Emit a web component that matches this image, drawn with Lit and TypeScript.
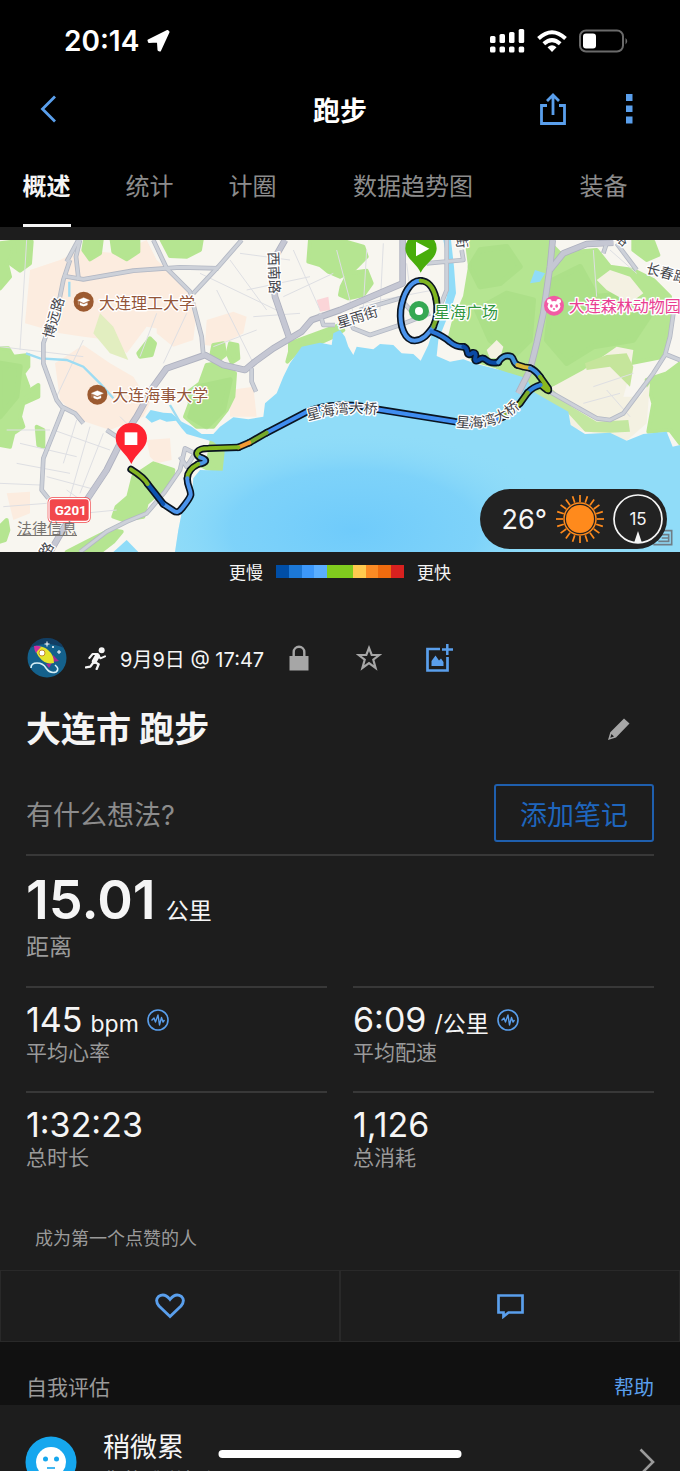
import { LitElement, html, svg, css } from 'lit';
import { customElement, property, state } from 'lit/decorators.js';
import { classMap } from 'lit/directives/class-map.js';
import { styleMap } from 'lit/directives/style-map.js';

// three map units per pixel at a width of 680
const SEA = `M525 966 L535 900 545 850 575 800 580 745 600 720 668 722 674 665 640 635 560 612 545 595 528 572 500 575 480 568
  455 578 436 562 452 540 490 548 515 550 545 575 575 590 605 612 640 612 660 590 700 562 745 568 790 560 795 520 830 490 850 440
  870 400 905 350 960 338 995 345 1000 310 1020 300 1035 320 1045 350 1060 375 1070 350 1120 358 1140 342 1180 345
  1205 370 1240 372 1262 392 1285 345 1302 290 1330 240 1345 180 1345 110 1330 30 1353 30 1362 110 1368 190 1352 240 1335 280
  1315 330 1310 378 1350 395 1390 388 1430 402 1500 420 1580 445 1600 485 1660 520 1705 545 1712 585 1755 612 1830 608
  1880 632 1930 612 2000 605 2018 650 2040 645 2040 966Z`;

const CAMPUS = [
  'M90 120 L180 90 240 60 350 70 440 30 470 90 560 170 590 250 500 300 440 290 380 370 330 330 250 320 180 310 75 280Z',
  'M250 345 L330 400 400 440 450 520 430 560 330 600 240 570 180 510 165 400Z',
  'M620 270 L700 245 740 260 730 310 650 350 615 345Z',
  'M470 270 L590 245 580 330 520 350 470 310Z',
  'M690 480 L760 470 770 560 690 560Z',
  'M440 630 L510 625 515 690 470 700 450 680Z',
  'M20 790 L90 785 90 850 40 870Z',
];

const PARKS = [
  'M0 355 L25 355 40 380 85 375 85 410 70 430 85 470 60 500 115 465 115 500 70 520 60 560 70 590 40 610 30 650 0 645Z',
  'M0 40 L40 35 35 80 20 100 30 140 0 175Z',
  'M40 30 L95 35 90 100 60 122 30 100 45 70Z',
  'M255 30 L305 30 300 70 270 88 250 60Z',
  'M335 30 L415 30 415 65 380 88 340 65Z',
  'M485 30 L605 30 600 60 560 80 510 78Z',
  'M930 30 L1020 30 1090 50 1100 80 1060 120 1020 140 985 125 960 105 925 95Z',
  'M1025 170 L1045 130 1100 122 1115 160 1090 195 1045 205 1020 195Z',
  'M555 560 L570 520 560 490 600 460 620 405 650 400 705 430 700 500 680 540 640 590 590 590Z',
  'M640 345 L670 340 675 375 650 395 635 370Z',
  'M690 340 L712 345 715 385 695 398 683 370Z',
  'M415 370 L450 325 465 340 455 375 420 380Z',
  'M110 590 L130 600 130 650 115 645Z',
  'M870 365 L870 340 1020 285 1030 300 1000 320 960 338 905 350 862 395Z',
  'M350 830 L385 800 400 740 460 700 520 720 515 755 440 820 430 860 370 870 340 860Z',
  'M200 966 L260 935 330 900 365 905 340 935 300 966Z',
  'M0 890 L20 870 25 900 15 930 0 935Z',
  'M635 632 L670 655 670 722 620 715 600 705 625 690Z',
  'M1395 200 L1410 110 1400 30 1640 30 1680 70 1790 60 1830 110 1900 120 1960 150 2010 200 2010 260 1990 380 1890 400 1800 410 1700 450 1640 470 1600 490 1560 445 1490 410 1420 390 1380 345 1350 320 1360 280Z',
  'M1940 450 L2000 430 2040 400 2040 640 2010 600 1945 605 1960 520Z',
  'M1900 30 L1960 35 1975 75 1940 90 1900 60Z',
];

const WOODS = [
  'M1410 110 L1440 60 1520 50 1560 110 1500 160 1440 170Z',
  'M1430 240 L1520 190 1600 210 1590 330 1540 380 1470 330Z',
  'M1660 150 L1740 110 1790 200 1880 190 1960 240 1900 330 1780 350 1700 400 1640 330Z',
  'M570 560 L600 470 690 450 670 540 620 590Z',
  'M0 400 L60 410 50 500 0 560Z',
];

const SAND = [
  'M1790 150 L1830 120 1890 140 1930 190 1890 220 1820 180Z',
  'M1750 420 L1850 350 1900 360 1890 430 1870 500 1920 500 1950 460 1940 580 1880 632 1700 590 1690 540 1640 480Z',
  'M1460 360 L1490 330 1510 350 1500 385 1470 385Z',
];

const LANES = [
  'M60 640 L230 680 M50 700 L210 730 M20 600 L150 600 M0 760 L120 765 M160 600 L330 660 M230 570 L190 700 M270 590 L210 800 M310 610 L240 790',
  'M140 740 L290 780 M150 860 L350 840 M200 780 L270 830 M10 830 L140 820 M360 560 L420 620',
  'M80 30 L60 360 M0 350 L250 380 M250 330 L170 500 M470 250 L420 380 M560 250 L490 400',
  'M600 130 L850 250 M690 90 L800 240 M650 180 L760 400 M720 70 L870 90 M740 180 L930 140 M850 200 L1000 130 M880 60 L960 240',
  'M760 260 L900 250 M640 350 L770 300 M1010 60 L1060 250 M1100 60 L1090 230 M1150 40 L1140 240 M1040 230 L1300 180 M1220 100 L1230 180',
  'M1780 60 L1790 200 M1830 60 L1910 130 M1780 470 L1900 430 M1820 480 L1890 560 M1750 520 L1860 490',
];

const STREETS = [
  'M240 30 L228 80 236 150',
  'M210 90 L190 150 180 200 130 340 130 400 170 510 185 530 225 550 250 580',
  'M190 138 L250 148 400 122 540 112 655 115',
  'M235 30 L200 95',
  'M460 30 L500 115 570 185 605 320 610 375',
  'M725 30 L655 110 580 190',
  'M190 535 L130 685 125 780 145 805',
  'M755 415 L755 455 768 485',
  'M960 250 L970 285 1005 285',
  'M240 966 L320 905 380 875 440 850 495 785 540 720 555 655 585 670 560 710 540 680',
  'M320 600 L350 620',
  'M1340 30 L1340 180 1320 230 M1280 100 L1390 90 1385 60',
  'M1050 270 L1060 295 1110 315 1200 285 1290 250 M1080 240 L1200 205 1240 250',
  'M1910 120 L1850 40 M1810 70 L1820 40',
  'M2020 250 L2010 320 1995 375 1960 430 1870 550 1830 570 1790 565 1640 480',
  'M1995 372 L2040 390',
];

const HIGHWAYS = [
  'M855 30 L815 100 825 200 870 330',
  'M1208 30 L1208 160 1020 240 935 270 905 305 820 355 765 395 735 420 670 405 615 375 500 415 460 470 410 560 370 620 320 720 260 810 200 880 150 966',
  'M1658 30 L1650 110 1630 250 1610 340 1590 420 1555 490',
  'M1650 120 L1690 70 1760 42 1840 38',
];

const ROUTE: [string, string][] = [
  ['M1262 152 C1230 150 1208 195 1202 240 C1198 290 1215 332 1244 332 C1270 330 1284 312 1300 290', '#4b94ec'],
  ['M1300 290 C1312 265 1314 235 1308 205', '#7cae2e'],
  ['M1308 205 C1300 170 1282 153 1262 152', '#7fb51f'],
  ['M1294 304 C1315 312 1335 322 1350 336 Q1370 352 1390 350', '#2a76d4'],
  ['M1390 350 Q1400 352 1402 366 T1418 368 Q1430 366 1426 382 T1436 390 Q1448 380 1460 391 T1495 397', '#0a4aa3'],
  ['M1495 397 C1505 380 1520 374 1534 380 C1544 388 1538 398 1552 405', '#3f92d8'],
  ['M1552 405 L1572 411 1590 414', '#d9b83a'],
  ['M1590 414 Q1606 420 1620 440', '#3d8de0'],
  ['M1620 440 L1645 475 Q1648 488 1636 476 L1622 464', '#8ab820'],
  ['M1622 465 Q1600 470 1583 488', '#2f80dc'],
  ['M1583 488 L1560 520 1510 560', '#7fae2c'],
  ['M1510 560 C1470 580 1420 582 1365 575 L1120 536', '#3f8df0'],
  ['M1120 536 C1060 520 980 520 915 548 L800 608', '#3f8df0'],
  ['M800 608 L748 638', '#75a92c'],
  ['M748 638 L715 652', '#f39a35'],
  ['M715 652 L625 655 C590 655 582 672 600 682', '#83b81f'],
  ['M600 682 C625 690 620 698 595 702', '#4c96e6'],
  ['M595 702 C575 712 562 725 562 745', '#86b820'],
  ['M562 745 C560 765 574 780 572 795 Q570 805 545 836 Q534 852 520 842 L490 822', '#4b94ec'],
  ['M490 822 L465 790 443 762', '#0d54b0'],
  ['M443 762 Q432 742 393 718', '#84b525'],
];

const PACE_COLORS = ['#004ea6', '#1c78d6', '#3c98fa', '#5aaeff', '#80cc1e', '#80cc1e', '#ffca4e', '#fb8b24', '#ef6b0e', '#d8211f'];

@customElement('activity-map')
export class ActivityMap extends LitElement {
  static styles = css`
    :host {
      display: block;
      position: relative;
      background: #8fdcf8;
    }
    .map {
      display: block;
      width: 100%;
      height: auto;
    }
    .label {
      font-family: 'Noto Sans CJK SC', sans-serif;
      font-size: 42px;
      fill: #45464c;
      stroke: #ffffff;
      stroke-width: 8px;
      stroke-linejoin: round;
      paint-order: stroke;
    }
    .place {
      font-size: 48px;
    }
    .school { fill: #935539; }
    .square { fill: #2f9640; }
    .zoo { fill: #e93f92; }
    .shield {
      font-family: 'Roboto', sans-serif;
      font-size: 40px;
      font-weight: 700;
      fill: #ffffff;
    }
    .legal {
      position: absolute;
      left: 17px;
      bottom: 13px;
      font-size: 15px;
      line-height: 20px;
      color: #77736f;
    }
    .weather {
      position: absolute;
      right: 13px;
      bottom: 3px;
      display: flex;
      align-items: center;
      gap: 8px;
      height: 60px;
      padding: 0 4px 0 21px;
      border-radius: 30px;
      background: #222222;
      color: #f5f5f5;
      font-size: 27px;
    }
    .weather svg {
      display: block;
    }
    .wind {
      display: grid;
      place-items: center;
      font-size: 17px;
    }
    .wind > * {
      grid-area: 1 / 1;
    }
  `;

  renderSchool(x: number, y: number) {
    return svg`
      <circle cx=${x} cy=${y} r="30" fill="#9c5a30"/>
      <path transform="translate(${x} ${y})" d="M-18 -4L0 -12 18 -4 0 4ZM-11 3V10Q0 17 11 10V3L0 8ZM-16 -2V9" fill="#fff" stroke="#fff" stroke-width="1"/>
    `;
  }

  render() {
    return html`
      <svg class="map" viewBox="0 30 2040 936" role="img" aria-label="路线地图">
        <defs>
          <radialGradient id="deep">
            <stop offset="0" stop-color="#6fcbfb"/>
            <stop offset=".6" stop-color="#79d0fa" stop-opacity=".8"/>
            <stop offset="1" stop-color="#90dcf8" stop-opacity="0"/>
          </radialGradient>
        </defs>
        <rect y="30" width="2040" height="936" fill="#f8f6f0"/>
        ${CAMPUS.map((d) => svg`<path d=${d} fill="#fcecdf"/>`)}
        <path d="M950 210L985 200 990 240 960 245Z" fill="#fbd5d8"/>
        <path d="M300 250L340 290 385 390 330 370 280 310Z" fill="#e2eec0"/>
        ${PARKS.map((d) => svg`<path d=${d} fill="#b5e591" stroke="#b5e591" stroke-width="12" stroke-linejoin="round"/>`)}
        ${WOODS.map((d) => svg`<path d=${d} fill="#9fd97c" stroke="#9fd97c" stroke-width="16" stroke-linejoin="round" opacity=".4"/>`)}
        ${SAND.map((d) => svg`<path d=${d} fill="#f4f1e2"/>`)}
        <path d="M1755 400L1820 375 1880 370 1900 410 1890 470 1830 410 1760 420Z" fill="#c5e59b"/>
        <path d="M1600 485L1660 480 1715 530 1790 575 1885 570 1890 605 1830 608 1755 605 1700 545 1640 520Z" fill="#c3e7a0"/>
        ${LANES.map((d) => svg`<path d=${d} fill="none" stroke="#dedfe3" stroke-width="3"/>`)}
        <path d=${SEA} fill="#90dcf8"/>
        <clipPath id="sea"><path d=${SEA}/></clipPath>
        <ellipse cx="1060" cy="900" rx="620" ry="300" fill="url(#deep)" clip-path="url(#sea)"/>
        <path d="M340 966L380 930 415 966Z" fill="#90dcf8"/>
        <path d="M78 370L120 385 200 390 250 410 300 460 340 505M208 155L208 200M510 525L545 585" fill="none" stroke="#9ddcf3" stroke-width="7"/>
        <path d="M1590 160L1605 120 1635 130 1620 155Z" fill="#90dcf8"/>
        <g fill="none" stroke-linejoin="round">
          ${STREETS.map((d) => svg`<path d=${d} stroke="#b3b8c4" stroke-width="14"/>`)}
          ${HIGHWAYS.map((d) => svg`<path d=${d} stroke="#aeb1bf" stroke-width="20"/>`)}
          ${STREETS.map((d) => svg`<path d=${d} stroke="#cdd1d9" stroke-width="9"/>`)}
          ${HIGHWAYS.map((d) => svg`<path d=${d} stroke="#c5c7d3" stroke-width="15"/>`)}
        </g>
        <g fill="none" stroke-linecap="round" stroke-linejoin="round">
          ${ROUTE.map(([d]) => svg`<path d=${d} stroke="#0a1420" stroke-width="22"/>`)}
          ${ROUTE.map(([d, color]) => svg`<path d=${d} stroke=${color} stroke-width="12"/>`)}
        </g>

        ${this.renderSchool(251, 215)}
        ${this.renderSchool(292, 494)}
        <circle cx="1257" cy="243" r="30" fill="#35a853"/>
        <circle cx="1257" cy="243" r="12" fill="#fff"/>
        <circle cx="1662" cy="227" r="30" fill="#f25ba4"/>
        <g fill="#fff">
          <circle cx="1648" cy="214" r="7"/>
          <circle cx="1676" cy="214" r="7"/>
          <ellipse cx="1662" cy="229" rx="19" ry="16"/>
        </g>
        <g fill="#f25ba4">
          <ellipse cx="1654" cy="228" rx="4" ry="5"/>
          <ellipse cx="1670" cy="228" rx="4" ry="5"/>
          <circle cx="1662" cy="237" r="3"/>
        </g>

        <path id="bridge-west" d="M924 572Q1030 540 1140 554" fill="none"/>
        <path id="bridge-east" d="M1367 590C1460 602 1526 580 1590 500" fill="none"/>
        <text class="label place school" x="297" y="236">大连理工大学</text>
        <text class="label place school" x="337" y="514">大连海事大学</text>
        <text class="label place square" x="1302" y="263">星海广场</text>
        <text class="label place zoo" x="1706" y="247">大连森林动物园</text>
        <text class="label" transform="translate(158 328) rotate(-74)">博远路</text>
        <text class="label" transform="translate(805 66) rotate(88)">西南路</text>
        <text class="label" transform="translate(1016 294) rotate(-17)">星雨街</text>
        <text class="label" transform="translate(1936 128) rotate(15)">长春路</text>
        <text class="label" transform="translate(1368 14) rotate(84)">街</text>
        <text class="label" transform="translate(1840 24) rotate(40)">路</text>
        <text class="label" transform="translate(142 984) rotate(-60)">路</text>
        <text class="label"><textPath href="#bridge-west">星海湾大桥</textPath></text>
        <text class="label"><textPath href="#bridge-east">星海湾大桥</textPath></text>

        <rect x="143" y="802" width="129" height="76" rx="14" fill="#f2474c"/>
        <rect x="147" y="806" width="121" height="68" rx="11" fill="#f2474c" stroke="#fff" stroke-width="4"/>
        <text class="shield" x="164" y="854">G201</text>

        <path d="M394 702C380 670 347 655 347 625A47 46 0 0 1 441 625C441 655 408 670 394 702Z" fill="#ff2330"/>
        <rect x="374" y="607" width="38" height="38" fill="#fff"/>
        <path d="M1262 128C1250 100 1216 85 1216 55A47 46 0 0 1 1310 55C1310 85 1276 100 1262 128Z" fill="#49ad0b"/>
        <path d="M1248 35L1288 56 1248 79Z" fill="#fff"/>
        <path d="M1975 902H2015V944H1960M1985 914H2006V934H1975M1985 924H2004" fill="none" stroke="#6f7d86" stroke-width="5"/>
      </svg>
      <a class="legal" href="#legal">法律信息</a>
      <div class="weather">
        <span>26°</span>
        <svg width="50" height="50" viewBox="-25 -25 50 50" aria-hidden="true">
          <circle r="14" fill="#ff8a1c"/>
          <circle r="16" fill="none" stroke="#ff8a1c" stroke-width="1.5"/>
          ${Array.from({ length: 20 }, (_, i) => svg`<path d="M0 -17V-24" stroke="#ff8a1c" stroke-width="1.7" transform="rotate(${i * 18})"/>`)}
        </svg>
        <div class="wind">
          <svg width="50" height="50" viewBox="-25 -25 50 50" aria-hidden="true">
            <circle r="24" fill="none" stroke="#f5f5f5" stroke-width="1.7"/>
            <path d="M0 12L4 24H-4Z" fill="#f5f5f5"/>
          </svg>
          <span>15</span>
        </div>
      </div>
    `;
  }
}

@customElement('stat-item')
export class StatItem extends LitElement {
  @property() value = '';
  @property() unit = '';
  @property() label = '';
  @property({ type: Boolean }) chart = false;

  static styles = css`
    :host {
      display: block;
      padding: 12px 0 25px;
      border-top: 2px solid #383838;
    }
    .value {
      display: flex;
      align-items: baseline;
      gap: 8px;
      height: 40px;
      font-size: 34px;
      line-height: 40px;
      color: #f5f5f5;
    }
    .unit {
      font-size: 23px;
    }
    .label {
      font-size: 21px;
      line-height: 26px;
      color: #9a9a9a;
    }
    button {
      align-self: center;
      display: flex;
      padding: 0;
      border: none;
      background: none;
      color: #5a9fec;
    }
  `;

  renderChart() {
    return html`
      <button aria-label="图表">
        <svg width="22" height="22" viewBox="0 0 22 22" fill="none" stroke="currentColor">
          <circle cx="11" cy="11" r="10" stroke-width="1.6"/>
          <path d="M4.5 11.5L7 9 8.5 13 11 6 12.5 16 14.5 8.5 16 13 17.5 11" stroke-width="1.4" stroke-linejoin="round"/>
        </svg>
      </button>
    `;
  }

  render() {
    return html`
      <div class="value">
        <span>${this.value}</span>
        ${this.unit ? html`<span class="unit">${this.unit}</span>` : ''}
        ${this.chart ? this.renderChart() : ''}
      </div>
      <div class="label">${this.label}</div>
    `;
  }
}

@customElement('app-root')
export class AppRoot extends LitElement {
  @state() private tab = '概述';

  private tabs = ['概述', '统计', '计圈', '数据趋势图', '装备'];

  static styles = css`
    :host {
      display: flex;
      flex-direction: column;
      position: relative;
      height: 100vh;
      overflow: hidden;
      background: #1d1d1d;
      color: #f5f5f5;
      font-family: 'Inter', 'Noto Sans CJK SC', sans-serif;
    }
    button {
      padding: 0;
      border: none;
      background: none;
      color: inherit;
      font: inherit;
      cursor: pointer;
    }
    svg {
      display: block;
      flex: none;
    }
    h1, h2, h3, p {
      margin: 0;
      font-weight: 400;
    }
    .top {
      flex: none;
      background: #000000;
    }
    .status {
      display: flex;
      align-items: center;
      justify-content: space-between;
      height: 82px;
      padding: 0 51px 0 64px;
      font-size: 28px;
      font-weight: 600;
      color: #ffffff;
    }
    .status div {
      display: flex;
      align-items: center;
      gap: 8px;
    }
    .status .icons {
      gap: 12px;
    }
    .nav {
      display: grid;
      grid-template-columns: 1fr auto 1fr;
      align-items: center;
      height: 54px;
      padding: 0 32px;
      color: #5a9fec;
    }
    .nav h1 {
      font-size: 27px;
      font-weight: 700;
      color: #ffffff;
    }
    .nav .actions {
      display: flex;
      justify-content: flex-end;
      gap: 44px;
    }
    .tabs {
      display: grid;
      grid-template-columns: 93fr 113fr 93fr 228fr 153fr;
      justify-items: center;
    }
    .tabs button {
      padding: 33px 0 19px;
      border-bottom: 3px solid transparent;
      font-size: 24px;
      line-height: 36px;
      color: #8c8c8c;
      white-space: nowrap;
    }
    .tabs button.active {
      border-color: #f5f5f5;
      font-weight: 700;
      color: #f5f5f5;
    }
    main {
      flex: 1;
      min-height: 0;
      padding-top: 13px;
      overflow-y: auto;
      scrollbar-width: none;
    }
    .legend {
      display: flex;
      align-items: center;
      justify-content: center;
      gap: 13px;
      height: 38px;
      font-size: 17px;
    }
    .pace {
      display: flex;
      width: 128px;
      height: 13px;
    }
    .pace span {
      flex: 1;
    }
    .summary {
      padding: 48px 26px 0;
    }
    .meta {
      display: flex;
      align-items: center;
      height: 40px;
      font-size: 20px;
      color: #a6a6a6;
    }
    .runner {
      margin: 0 14px 0 17px;
    }
    .meta time {
      color: #f5f5f5;
    }
    .meta button {
      display: flex;
      justify-content: center;
      width: 70px;
    }
    .meta .photo {
      color: #5a9fec;
    }
    .name {
      display: flex;
      align-items: center;
      justify-content: space-between;
      margin-top: 27px;
      padding-right: 24px;
      color: #a6a6a6;
    }
    .name h2 {
      font-size: 35px;
      font-weight: 700;
      line-height: 48px;
      color: #f5f5f5;
    }
    .notes {
      display: flex;
      align-items: center;
      justify-content: space-between;
      margin-top: 31px;
      padding-bottom: 12px;
      border-bottom: 2px solid #383838;
      font-size: 27px;
      color: #8c8c8c;
    }
    .notes button {
      height: 58px;
      padding: 0 24px;
      border: 2px solid #1f5fae;
      border-radius: 3px;
      color: #1f66bd;
    }
    .distance {
      padding: 12px 0 24px;
    }
    .distance .value {
      display: flex;
      align-items: baseline;
      gap: 10px;
      height: 64px;
      font-size: 54px;
      font-weight: 600;
      line-height: 64px;
    }
    .distance .unit {
      font-size: 23px;
      font-weight: 400;
    }
    .distance p {
      font-size: 23px;
      line-height: 30px;
      color: #9a9a9a;
    }
    .stats {
      display: grid;
      grid-template-columns: 1fr 1fr;
      column-gap: 26px;
    }
    .likes {
      padding: 30px 35px 18px;
      font-size: 18px;
      line-height: 26px;
      color: #9a9a9a;
    }
    .social {
      display: grid;
      grid-template-columns: 1fr 1fr;
      color: #5a9fec;
    }
    .social button {
      display: grid;
      place-items: center;
      height: 72px;
      border: 1px solid #292929;
    }
    .section {
      display: flex;
      justify-content: space-between;
      padding: 33px 26px 4px;
      background: #111111;
      line-height: 26px;
      color: #9a9a9a;
    }
    .section h2 {
      font-size: 21px;
    }
    .section a {
      font-size: 20px;
      color: #5a9fec;
      text-decoration: none;
    }
    .effort {
      display: flex;
      align-items: center;
      gap: 26px;
      width: 100%;
      padding: 24px 25px;
      text-align: left;
    }
    .effort div {
      flex: 1;
    }
    .effort h3 {
      font-size: 27px;
      line-height: 38px;
    }
    .effort p {
      font-size: 20px;
      line-height: 28px;
      color: #9a9a9a;
    }
    .home {
      position: absolute;
      left: 50%;
      bottom: 13px;
      width: 243px;
      height: 8px;
      border-radius: 4px;
      background: #ffffff;
      translate: -50%;
    }
  `;

  renderStatus() {
    return html`
      <div class="status">
        <div>
          <span>20:14</span>
          <svg width="23" height="22" viewBox="0 0 23 22"><path d="M1.5 10.5L20.5 1 21.5 2 13 20.5 11.5 20 11 12.5 10 11.5 2 12Z" fill="#fff" stroke="#fff" stroke-width="2" stroke-linejoin="round"/></svg>
        </div>
        <div class="icons">
          <svg width="35" height="24" viewBox="0 0 35 24" fill="#fff">
            <rect x="0" y="7" width="5.5" height="7" rx="1.5"/>
            <rect x="9.5" y="5" width="5.5" height="9" rx="1.5"/>
            <rect x="19" y="3" width="5.5" height="11" rx="1.5"/>
            <rect x="28.7" y="0" width="5.5" height="14" rx="1.5"/>
            ${[0, 9.5, 19, 28.7].map((x) => svg`<rect x=${x} y="17.5" width="5.5" height="6" rx="1.5"/>`)}
          </svg>
          <svg width="30" height="22" viewBox="0 0 30 22" fill="none" stroke="#fff" stroke-width="4">
            <path d="M1.5 8.5Q15 -4 28.5 8.5"/>
            <path d="M6.8 13.8Q15 6.5 23.2 13.8"/>
            <path d="M10.5 17.2Q15 13.2 19.5 17.2L15 22Z" fill="#fff" stroke="none"/>
          </svg>
          <svg width="50" height="24" viewBox="0 0 50 24">
            <rect x="1" y="1.5" width="43" height="21" rx="6" fill="none" stroke="#6a6a6a" stroke-width="2"/>
            <rect x="4" y="4.5" width="13" height="15" rx="3" fill="#fff"/>
            <path d="M46.5 9Q50 12 46.5 15.5Z" fill="#6a6a6a"/>
          </svg>
        </div>
      </div>
    `;
  }

  renderMeta() {
    return html`
      <div class="meta">
        <svg width="42" height="40" viewBox="0 0 42 40">
          <circle cx="21" cy="20" r="19.5" fill="#14618c"/>
          <path d="M4 10A19.5 19.5 0 0 1 38 10Q20 2 4 10Z" fill="#123e63"/>
          <path d="M27 17L33 23 26 24ZM20 26L23 30 26 25Z" fill="#a82a91"/>
          <path d="M9 9Q17 7 22 12 28 17 28 25 19 27 14 20 10 16 9 9Z" fill="#e4e32b"/>
          <path d="M8 8Q12 7 15 9 12 12 10 15 8 12 8 8Z" fill="#d02fa0"/>
          <circle cx="16" cy="15" r="3" fill="#fff" stroke="#c28b2c"/>
          <path d="M21 3.5V8.5M18.5 6H23.5M33 12V16M31 14H35M27 8V10M26 9H28" stroke="#fff" stroke-width="1"/>
          <path d="M5 30Q5 25 11 25 17 25 20 30 24 36 30 34 34 31 29 27" fill="none" stroke="#d7f0f7" stroke-width="1.6"/>
        </svg>
        <svg class="runner" width="21" height="23" viewBox="196 47 63 69" fill="none" stroke="#f5f5f5" stroke-linecap="round" stroke-linejoin="round">
          <circle cx="246" cy="57" r="9" fill="#f5f5f5" stroke="none"/>
          <path d="M233 74L224 90" stroke-width="15"/>
          <path d="M209 80L219 68H234L242 81L256 75" stroke-width="6"/>
          <path d="M225 92L237 99 231 113M220 95L212 106 199 108" stroke-width="7"/>
        </svg>
        <time>9月9日 @ 17:47</time>
        <button aria-label="隐私">
          <svg width="20" height="26" viewBox="0 0 20 26"><rect x="0.5" y="11" width="19" height="14.5" fill="currentColor"/><path d="M4.7 12V7A5.3 5.3 0 0 1 15.3 7V12" fill="none" stroke="currentColor" stroke-width="2.4"/></svg>
        </button>
        <button aria-label="收藏">
          <svg width="26" height="26" viewBox="0 0 26 26" fill="none" stroke="currentColor" stroke-width="2.2"><path d="M13 3L15.7 10H23.3L17.3 14.7 19.6 23 13 18.2 6.4 23 8.7 14.7 2.7 10H10.3Z"/></svg>
        </button>
        <button class="photo" aria-label="添加照片">
          <svg width="28" height="28" viewBox="0 0 28 28">
            <path d="M15 5H2.5V26.5H22.5V13" fill="none" stroke="currentColor" stroke-width="2.7"/>
            <path d="M22.3 0V11M17 5.5H28" stroke="currentColor" stroke-width="2.5"/>
            <path d="M6.5 22V17L10.5 11.5 14 16.5 16 14.5 18.5 18V22Z" fill="currentColor"/>
          </svg>
        </button>
      </div>
    `;
  }

  render() {
    return html`
      <header class="top">
        ${this.renderStatus()}
        <div class="nav">
          <button aria-label="返回">
            <svg width="32" height="28" viewBox="0 0 32 28"><path d="M23 1.5L10.5 14 23 26.5" fill="none" stroke="currentColor" stroke-width="2.8"/></svg>
          </button>
          <h1>跑步</h1>
          <div class="actions">
            <button aria-label="分享">
              <svg width="26" height="32" viewBox="0 0 26 32" fill="none" stroke="currentColor" stroke-width="2.8"><path d="M7 12.5H1.5V30.5H24.5V12.5H19M13 22V2M7 8L13 2 19 8"/></svg>
            </button>
            <button aria-label="更多">
              <svg width="38" height="30" viewBox="0 0 38 30" fill="currentColor"><path d="M16 0H22.5V7H16ZM16 11.5H22.5V18H16ZM16 22.5H22.5V29.5H16Z"/></svg>
            </button>
          </div>
        </div>
        <nav class="tabs" role="tablist">
          ${this.tabs.map((name) => html`
            <button
              role="tab"
              class=${classMap({ active: name === this.tab })}
              aria-selected=${name === this.tab}
              @click=${() => (this.tab = name)}
            >${name}</button>
          `)}
        </nav>
      </header>
      <main>
        <activity-map></activity-map>
        <div class="legend">
          <span>更慢</span>
          <div class="pace">${PACE_COLORS.map((background) => html`<span style=${styleMap({ background })}></span>`)}</div>
          <span>更快</span>
        </div>
        <section class="summary">
          ${this.renderMeta()}
          <div class="name">
            <h2>大连市 跑步</h2>
            <button aria-label="编辑名称">
              <svg width="22" height="22" viewBox="0 0 22 22"><path d="M16 .5L21.5 5.5 8 19.5 0 22 2.3 14.2ZM3.5 16L2.3 19.8 6 18.5Z" fill="currentColor" fill-rule="evenodd"/></svg>
            </button>
          </div>
          <div class="notes">
            <span>有什么想法?</span>
            <button>添加笔记</button>
          </div>
          <div class="distance">
            <div class="value"><span>15.01</span><span class="unit">公里</span></div>
            <p>距离</p>
          </div>
          <div class="stats">
            <stat-item value="145" unit="bpm" label="平均心率" chart></stat-item>
            <stat-item value="6:09" unit="/公里" label="平均配速" chart></stat-item>
            <stat-item value="1:32:23" label="总时长"></stat-item>
            <stat-item value="1,126" label="总消耗"></stat-item>
          </div>
        </section>
        <p class="likes">成为第一个点赞的人</p>
        <div class="social">
          <button aria-label="点赞">
            <svg width="30" height="26" viewBox="0 0 30 26" fill="none" stroke="currentColor" stroke-width="2.8"><path d="M15 23.5L4 13Q-.5 7.500 3.5 3.5 9.5 -.5 15 6.5 20.5 -.5 26.5 3.5 30.5 7.5 26 13Z"/></svg>
          </button>
          <button aria-label="评论">
            <svg width="27" height="25" viewBox="0 0 27 25" fill="none" stroke="currentColor" stroke-width="2.7"><path d="M1.5 1.5H25.5V18.5H11.5L6.5 22.5V18.5H1.5Z"/></svg>
          </button>
        </div>
        <div class="section">
          <h2>自我评估</h2>
          <a href="#help">帮助</a>
        </div>
        <button class="effort">
          <svg width="52" height="52" viewBox="0 0 52 52">
            <circle cx="26" cy="26" r="25.5" fill="#16a7ee"/>
            <circle cx="26" cy="26" r="15" fill="#fff"/>
            <circle cx="20.5" cy="23" r="2.5" fill="#16a7ee"/>
            <circle cx="31.5" cy="23" r="2.5" fill="#16a7ee"/>
            <path d="M22 32H30" stroke="#16a7ee" stroke-width="1.6"/>
          </svg>
          <div>
            <h3>稍微累</h3>
            <p>您的感觉如何</p>
          </div>
          <svg width="16" height="28" viewBox="0 0 16 28"><path d="M1.5 1.5L14 14 1.5 26.5" fill="none" stroke="#9a9a9a" stroke-width="2.6"/></svg>
        </button>
      </main>
      <div class="home"></div>
    `;
  }
}
